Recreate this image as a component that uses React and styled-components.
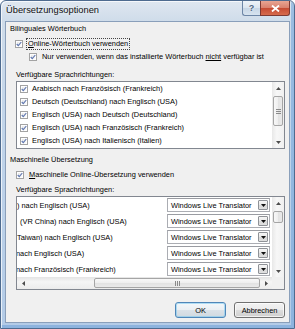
import React from "react";
import styled, { createGlobalStyle } from "styled-components";

const GlobalStyle = createGlobalStyle`
  html, body {
    margin: 0;
    padding: 0;
    background: #ffffff;
  }
  body {
    font-family: "Liberation Sans", Arial, sans-serif;
    color: #000;
  }
`;

const bilingualItems = [
  "Arabisch nach Französisch (Frankreich)",
  "Deutsch (Deutschland) nach Englisch (USA)",
  "Englisch (USA) nach Deutsch (Deutschland)",
  "Englisch (USA) nach Französisch (Frankreich)",
  "Englisch (USA) nach Italienisch (Italien)",
];

// visible part of each row, the list is scrolled to the right
const machineItems = [
  { text: ") nach Englisch (USA)", shift: 0 },
  { text: "(VR China) nach Englisch (USA)", shift: 3 },
  { text: "Taiwan) nach Englisch (USA)", shift: 0 },
  { text: "nach Englisch (USA)", shift: -1 },
  { text: "nach Französisch (Frankreich)", shift: -1 },
];

const Arrow = ({ dir }) => {
  const vertical = dir === "up" || dir === "down";
  const paths = {
    up: "M0 3 L2.5 0 L5 3 Z",
    down: "M0 0 L5 0 L2.5 3 Z",
    left: "M3 0 L3 5 L0 2.5 Z",
    right: "M0 0 L0 5 L3 2.5 Z",
  };
  return (
    <svg
      width={vertical ? 5 : 3}
      height={vertical ? 3 : 5}
      viewBox={vertical ? "0 0 5 3" : "0 0 3 5"}
    >
      <path d={paths[dir]} fill="#4d4d4d" />
    </svg>
  );
};

const CheckBox = () => (
  <Box>
    <svg width="6" height="6" viewBox="0 0 6 6">
      <path
        d="M0.7 3 L2.3 4.7 L5.3 1"
        fill="none"
        stroke="#5f77b0"
        strokeWidth="1.1"
      />
    </svg>
  </Box>
);

const App = () => {
  return (
    <>
      <GlobalStyle />
      <Window>
        <TitleBar>
          <Title>Übersetzungsoptionen</Title>
          <CaptionButtons>
            <HelpButton>?</HelpButton>
            <CloseButton>
              <svg width="9" height="7" viewBox="0 0 9 7">
                <path
                  d="M1 0.5 L8 6.5 M8 0.5 L1 6.5"
                  stroke="#ffffff"
                  strokeWidth="1.8"
                />
              </svg>
            </CloseButton>
          </CaptionButtons>
        </TitleBar>

        <Client>
          <SectionTitle $top={1}>Bilinguales Wörterbuch</SectionTitle>
          <OptionRow $top={3} $indent={5}>
            <CheckBox />
            <FocusLabel>
              <u>O</u>nline-Wörterbuch verwenden
            </FocusLabel>
          </OptionRow>
          <OptionRow $top={1} $indent={19}>
            <CheckBox />
            <Label>
              Nur verwenden, wenn das installierte Wörterbuch <u>nicht</u>{" "}
              verfügbar ist
            </Label>
          </OptionRow>
          <ListLabel $top={6}>Verfügbare Sprachrichtungen:</ListLabel>

          <ListBox $rows="66px">
            <Rows>
              {bilingualItems.map((item) => (
                <CheckItem key={item}>
                  <CheckBox />
                  <span>{item}</span>
                </CheckItem>
              ))}
            </Rows>
            <VScroll>
              <ScrollButton>
                <Arrow dir="up" />
              </ScrollButton>
              <VTrack>
                <VThumb $top={2} $size={30}>
                  <Grip $vertical />
                </VThumb>
              </VTrack>
              <ScrollButton>
                <Arrow dir="down" />
              </ScrollButton>
            </VScroll>
          </ListBox>

          <SectionTitle $top={5}>Maschinelle Übersetzung</SectionTitle>
          <OptionRow $top={3} $indent={6}>
            <CheckBox />
            <Label>
              <u>M</u>aschinelle Online-Übersetzung verwenden
            </Label>
          </OptionRow>
          <ListLabel $top={3}>Verfügbare Sprachrichtungen:</ListLabel>

          <ListBox $rows="80px 12px">
            <Rows>
              {machineItems.map((item) => (
                <TranslatorRow key={item.text}>
                  <RowText>
                    <Shifted $shift={item.shift}>{item.text}</Shifted>
                  </RowText>
                  <Combo>
                    <span>Windows Live Translator</span>
                    <DropButton>
                      <Arrow dir="down" />
                    </DropButton>
                  </Combo>
                </TranslatorRow>
              ))}
            </Rows>
            <VScroll>
              <ScrollButton>
                <Arrow dir="up" />
              </ScrollButton>
              <VTrack>
                <VThumb $top={2} $size={12} />
              </VTrack>
              <ScrollButton>
                <Arrow dir="down" />
              </ScrollButton>
            </VScroll>
            <HScroll>
              <ScrollButton>
                <Arrow dir="left" />
              </ScrollButton>
              <HTrack>
                <HThumb $size={166}>
                  <Grip />
                </HThumb>
              </HTrack>
              <ScrollButton>
                <Arrow dir="right" />
              </ScrollButton>
            </HScroll>
            <Corner />
          </ListBox>

          <ButtonBar>
            <DialogButton $default>OK</DialogButton>
            <DialogButton>Abbrechen</DialogButton>
          </ButtonBar>
        </Client>
      </Window>
    </>
  );
};

export default App;

const Window = styled.div`
  width: 295px;
  height: 329px;
  box-sizing: border-box;
  display: flex;
  flex-direction: column;
  padding: 0 4px 5px 4px;
  border: 1px solid #4e6b8f;
  border-radius: 6px 6px 0 0;
  background: linear-gradient(
    to bottom,
    #dfe7f0 0px,
    #cfdcea 20px,
    #c2d5ea 120px,
    #b3cbe7 100%
  );
  box-shadow: inset 1px 1px 0 rgba(255, 255, 255, 0.7),
    inset -3px -3px 0 rgba(110, 160, 215, 0.55);
`;

const TitleBar = styled.div`
  height: 20px;
  display: flex;
  align-items: flex-start;
`;

const Title = styled.div`
  font-size: 9.3px;
  line-height: 19px;
  padding-left: 1px;
  color: #111;
  text-shadow: 0 0 4px rgba(255, 255, 255, 0.9);
`;

const CaptionButtons = styled.div`
  margin-left: auto;
  display: flex;
  height: 15px;
`;

const HelpButton = styled.div`
  width: 18px;
  height: 15px;
  box-sizing: border-box;
  border: 1px solid #6d86a6;
  border-top: none;
  border-right: none;
  border-radius: 0 0 0 3px;
  background: linear-gradient(
    to bottom,
    #eef3f8 0%,
    #dbe5ef 50%,
    #c6d5e5 50%,
    #d7e3ef 100%
  );
  color: #4f6480;
  font-size: 9px;
  font-weight: bold;
  display: flex;
  align-items: center;
  justify-content: center;
  text-shadow: 0 0 2px #fff;
`;

const CloseButton = styled.div`
  width: 30px;
  height: 15px;
  box-sizing: border-box;
  border: 1px solid #7d3a33;
  border-top: none;
  border-radius: 0 0 3px 0;
  background: linear-gradient(
    to bottom,
    #e8a593 0%,
    #d9806c 50%,
    #c54a32 50%,
    #d66b4d 100%
  );
  display: flex;
  align-items: center;
  justify-content: center;
`;

const Client = styled.div`
  flex: 1;
  display: flex;
  flex-direction: column;
  background: #f0f0f0;
  border: 1px solid #8a9fba;
  padding: 0 4px 0 4px;
  font-size: 7.4px;
  min-height: 0;
`;

const SectionTitle = styled.div`
  height: 12px;
  line-height: 12px;
  margin-top: ${(p) => p.$top}px;
  white-space: nowrap;
`;

const OptionRow = styled.div`
  height: 12px;
  margin-top: ${(p) => p.$top}px;
  padding-left: ${(p) => p.$indent}px;
  display: flex;
  align-items: center;
  white-space: nowrap;
`;

const Box = styled.span`
  width: 8px;
  height: 8px;
  box-sizing: border-box;
  flex: 0 0 auto;
  border: 1px solid #a3a3a3;
  background: linear-gradient(135deg, #e2e2e2 0%, #f5f5f5 60%, #ffffff 100%);
  box-shadow: inset 0 0 0 1px #ffffff;
  display: flex;
  align-items: center;
  justify-content: center;
`;

const Label = styled.span`
  margin-left: 5px;
  line-height: 12px;
`;

const FocusLabel = styled.span`
  margin-left: 4px;
  padding: 0 1px;
  line-height: 10px;
  outline: 1px dotted #444;
`;

const ListLabel = styled.div`
  height: 12px;
  line-height: 12px;
  margin-top: ${(p) => p.$top}px;
  padding-left: 6px;
  white-space: nowrap;
`;

const ListBox = styled.div`
  margin-left: 6px;
  display: grid;
  grid-template-columns: 1fr 12px;
  grid-template-rows: ${(p) => p.$rows};
  border: 1px solid #828790;
  background: #ffffff;
`;

const Rows = styled.div`
  display: flex;
  flex-direction: column;
  overflow: hidden;
  min-width: 0;
`;

const CheckItem = styled.div`
  height: 13px;
  flex: 0 0 13px;
  display: flex;
  align-items: center;
  gap: 4px;
  padding-left: 3px;
  white-space: nowrap;
`;

const TranslatorRow = styled.div`
  height: 16px;
  flex: 0 0 16px;
  display: flex;
  align-items: center;
`;

const RowText = styled.div`
  flex: 0 0 150px;
  overflow: hidden;
  white-space: nowrap;
`;

const Shifted = styled.span`
  display: inline-block;
  margin-left: ${(p) => p.$shift}px;
`;

const Combo = styled.div`
  width: 103px;
  height: 14px;
  box-sizing: border-box;
  border: 1px solid #abadb3;
  border-top-color: #9a9ca2;
  background: #ffffff;
  display: flex;
  align-items: center;
  padding-left: 3px;
  white-space: nowrap;
`;

const DropButton = styled.div`
  margin-left: auto;
  margin-right: 1px;
  width: 10px;
  height: 10px;
  box-sizing: border-box;
  border: 1px solid #8f9297;
  border-radius: 1px;
  background: linear-gradient(
    to bottom,
    #f6f6f6 0%,
    #e9e9e9 50%,
    #d8d8d8 50%,
    #e0e0e0 100%
  );
  display: flex;
  align-items: center;
  justify-content: center;

  svg path {
    fill: #111;
  }
`;

const VScroll = styled.div`
  display: flex;
  flex-direction: column;
  background: linear-gradient(to right, #e8e8e8, #f7f7f7 40%, #f0f0f0);
`;

const HScroll = styled.div`
  display: flex;
  background: linear-gradient(to bottom, #e4e4e4, #f5f5f5 40%, #ececec);
`;

const Corner = styled.div`
  background: #f0f0f0;
`;

const ScrollButton = styled.div`
  flex: 0 0 12px;
  display: flex;
  align-items: center;
  justify-content: center;
`;

const VTrack = styled.div`
  flex: 1;
  display: flex;
  flex-direction: column;
`;

const HTrack = styled.div`
  flex: 1;
  display: flex;
  align-items: stretch;
  justify-content: flex-end;
  padding: 1px 0;
`;

const VThumb = styled.div`
  margin: ${(p) => p.$top}px 1px 0 1px;
  height: ${(p) => p.$size}px;
  box-sizing: border-box;
  border: 1px solid #a5a5a5;
  border-radius: 2px;
  background: linear-gradient(
    to right,
    #f8f8f8 0%,
    #eeeeee 50%,
    #e2e2e2 50%,
    #eaeaea 100%
  );
  display: flex;
  align-items: center;
  justify-content: center;
`;

const HThumb = styled.div`
  width: ${(p) => p.$size}px;
  box-sizing: border-box;
  border: 1px solid #a5a5a5;
  border-radius: 2px;
  background: linear-gradient(
    to bottom,
    #f8f8f8 0%,
    #eeeeee 50%,
    #e2e2e2 50%,
    #eaeaea 100%
  );
  display: flex;
  align-items: center;
  justify-content: center;
`;

const Grip = styled.div`
  width: 5px;
  height: 5px;
  background: ${(p) =>
    p.$vertical
      ? "repeating-linear-gradient(to bottom, #8a8a8a 0 1px, transparent 1px 2px)"
      : "repeating-linear-gradient(to right, #8a8a8a 0 1px, transparent 1px 2px)"};
`;

const ButtonBar = styled.div`
  margin-top: 12px;
  display: flex;
  justify-content: flex-end;
  gap: 8px;
`;

const DialogButton = styled.div`
  width: 51px;
  height: 16px;
  box-sizing: border-box;
  border: 1px solid ${(p) => (p.$default ? "#4f86b8" : "#707070")};
  border-radius: 3px;
  background: ${(p) =>
    p.$default
      ? "linear-gradient(to bottom, #f3f7fa 0%, #eaeff3 50%, #dbe2e8 50%, #d1d9e0 100%)"
      : "linear-gradient(to bottom, #f2f2f2 0%, #ebebeb 50%, #dddddd 50%, #cfcfcf 100%)"};
  box-shadow: inset 0 0 0 1px
    ${(p) => (p.$default ? "rgba(120, 200, 240, 0.55)" : "rgba(255,255,255,0.7)")};
  display: flex;
  align-items: center;
  justify-content: center;
  font-size: 7.4px;
`;
